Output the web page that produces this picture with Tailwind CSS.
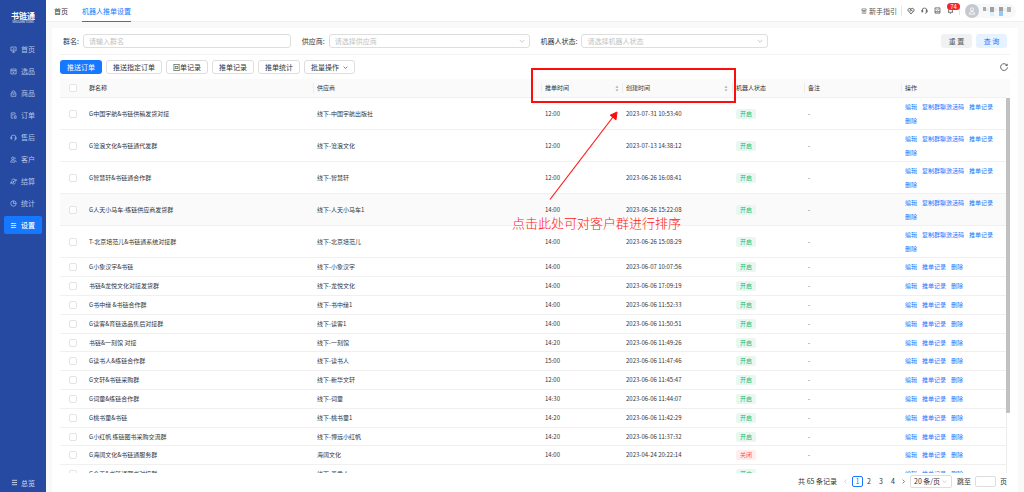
<!DOCTYPE html>
<html lang="zh-CN">
<head>
<meta charset="utf-8">
<meta name="viewport" content="width=device-width, initial-scale=1">
<title>机器人推单设置</title>
<script src="https://cdn.jsdelivr.net/npm/@tailwindcss/browser@4"></script>
</head>
<body class="h-screen overflow-hidden bg-[#f9f9f9] font-['Noto_Sans_CJK_SC',sans-serif] text-[7px] leading-[10px] text-[#333]">
<svg class="hidden">
  <defs>
    <symbol id="i-down" viewBox="0 0 8 8"><path d="M1 2.5l3 3.2 3-3.2" /></symbol>
    <symbol id="i-home" viewBox="0 0 8 8"><path d="M1 1.2h6v4.3H1zM2.5 7.2h3M4 5.5v1.7M2.6 4.2V3.4M4 4.2V2.6M5.4 4.2V3" /></symbol>
    <symbol id="i-pick" viewBox="0 0 8 8"><path d="M1 1.2h6v5.6H1zM1 3h6M3 4.2l2 1.6M5 4.2L3 5.8" /></symbol>
    <symbol id="i-goods" viewBox="0 0 8 8"><path d="M1.3 3.4h5.4v3.8H1.3zM2.3 3.4V2.6a1.7 1.7 0 0 1 3.4 0v.8M3 5.2h2" /></symbol>
    <symbol id="i-order" viewBox="0 0 8 8"><path d="M5.8 3V1H1.4v6h2.4M2.6 2.8h1.8M2.6 4.4h1M5 4.4h2v2.8H5z" /></symbol>
    <symbol id="i-head" viewBox="0 0 8 8"><path d="M1.2 4.6V4a2.8 2.8 0 0 1 5.6 0v.6M1 3.9h1v1.9H1zM6 3.9h1v1.9H6zM6.5 5.8c0 1-.8 1.4-2 1.4" /></symbol>
    <symbol id="i-user" viewBox="0 0 8 8"><path d="M3.2 4a1.4 1.4 0 1 0 0-2.8 1.4 1.4 0 0 0 0 2.8zM.8 7c0-1.6 1-2.4 2.4-2.4S5.6 5.4 5.6 7zM5.2 1.6a1.2 1.2 0 0 1 .3 2.2M6 4.8c.8.4 1.2 1.2 1.2 2.2" /></symbol>
    <symbol id="i-settle" viewBox="0 0 8 8"><path d="M6.8 3.4A2.9 2.9 0 0 0 1.5 2.6M1.2 4.6a2.9 2.9 0 0 0 5.3.8M7 1.2v2.2H5M1 6.8V4.6h2M3 3l1 1 1-1M4 4v1.5M3.1 4.3h1.8" /></symbol>
    <symbol id="i-stat" viewBox="0 0 8 8"><path d="M4 7.1a3.1 3.1 0 1 0 0-6.2 3.1 3.1 0 0 0 0 6.2zM4 1v3h3" /></symbol>
    <symbol id="i-set" viewBox="0 0 8 8"><path d="M1 1.7h6M1 4h6M1 6.3h6M2.8 1v1.4M5.2 3.3v1.4M2.8 5.6V7" /></symbol>
    <symbol id="i-menu" viewBox="0 0 8 8"><path d="M1 1.5h6M1 4h6M1 6.5h6" /></symbol>
    <symbol id="i-guide" viewBox="0 0 8 8"><path d="M1.2 1.2h5.6v2.2H1.2zM.8 5.2h6.4M1.2 7h5.6M4 3.4v1.8" /></symbol>
    <symbol id="i-shake" viewBox="0 0 8 8"><path d="M2.2 1.2L.6 3 4 7l3.4-4-1.6-1.8L4 2zM4 2L2.8 3.4l1 .7 1-.8 1.2 1.3" /></symbol>
    <symbol id="i-box" viewBox="0 0 8 8"><path d="M1.2 1h5.6v6H1.2zM1.2 5.4h5.6M2.8 2.6L4 3.7l1.2-1.1" /></symbol>
    <symbol id="i-bell" viewBox="0 0 8 8"><path d="M1 6h6M1.8 6V3.6a2.2 2.2 0 0 1 4.4 0V6M3.3 7.2h1.4M4 .8v.6" /></symbol>
    <symbol id="i-sort" viewBox="0 0 4 8"><path d="M2 .8L3.8 3H.2zM2 7.2L3.8 5H.2z" /></symbol>
  </defs>
</svg>

<div class="flex h-full">
  <aside class="flex w-[46px] shrink-0 flex-col bg-[#2649a1] text-[#b5c3e6]">
    <div class="flex flex-col items-center pt-[10px] text-white">
      <div class="text-[8px] leading-[11px] font-bold">书链通</div>
      <div class="text-[3px] leading-[3px]">SHULIAN TONG</div>
    </div>
    <nav id="menu" class="mt-[16px] flex flex-col gap-1 px-1"></nav>
    <a href="#" class="mt-auto flex h-[19px] items-center gap-[3px] pl-[11px] whitespace-nowrap text-[#d5def2]"><svg class="size-[7px] fill-none stroke-current" viewBox="0 0 8 8"><use href="#i-menu"/></svg>总览</a>
  </aside>

  <div class="flex min-w-0 flex-1 flex-col">
    <header class="flex h-[22px] shrink-0 items-stretch border-b border-[#f0f0f0] bg-white pr-2 pl-2">
      <nav class="flex gap-[14px]">
        <a href="#" class="flex items-center">首页</a>
        <a href="#" class="-mb-px flex items-center border-b border-[#1677ff] text-[#1677ff]">机器人推单设置</a>
      </nav>
      <div class="ml-auto flex items-center text-[#444]">
        <a href="#" class="flex items-center gap-[2px] border-r border-[#e5e5e5] pr-1 text-[#555]"><svg class="size-[6px] fill-none stroke-current stroke-[0.8]" viewBox="0 0 8 8"><use href="#i-guide"/></svg>新手指引</a>
        <div class="flex items-center gap-[6px] border-r border-[#e5e5e5] pr-[5px] pl-[5px]">
          <button aria-label="合作"><svg class="size-[8px] fill-none stroke-current stroke-[0.8]" viewBox="0 0 8 8"><use href="#i-shake"/></svg></button>
          <button aria-label="客服"><svg class="size-[7px] fill-none stroke-current stroke-[0.8]" viewBox="0 0 8 8"><use href="#i-head"/></svg></button>
          <button aria-label="消息"><svg class="size-[7px] fill-none stroke-current stroke-[0.8]" viewBox="0 0 8 8"><use href="#i-box"/></svg></button>
          <button aria-label="通知" class="relative"><svg class="size-[7px] fill-none stroke-current stroke-[0.8]" viewBox="0 0 8 8"><use href="#i-bell"/></svg><span class="absolute -top-1 left-0 h-[7px] w-[13px] rounded-full bg-[#f5222d] text-center text-[6px] leading-[7px] text-white">74</span></button>
        </div>
        <div class="ml-[5px] flex h-[14px] w-[51px] items-center gap-1 rounded-full bg-[#f7f8f9]">
          <svg class="size-[14px]" viewBox="0 0 14 14"><circle cx="7" cy="7" r="7" fill="#c5c9cf"/><path d="M7 7a1.6 1.6 0 1 0 0-3.2A1.6 1.6 0 0 0 7 7zM4.3 10.2c0-1.6 1-2.5 2.7-2.5s2.7.9 2.7 2.5z" fill="none" stroke="#fff" stroke-width=".8"/></svg>
          <svg class="h-[10px] w-[29px]" viewBox="0 0 29 10"><path fill="#a8a8a8" d="M0 1h3v4H0z"/><path fill="#9f9f9f" d="M7 1h4v5H7zM16 1h4v4h-4z"/><path fill="#b5aeb0" d="M24 1h4v5h-4z"/><path fill="#d9f1fb" d="M7 6h4v4H7z"/><path fill="#8ecbfa" d="M16 5h4v5h-4z"/><path fill="#efefef" d="M3 2h3v3H3zM11 2h3v3h-3zM20 2h4v3h-4z"/></svg>
        </div>
      </div>
    </header>

    <main class="mx-[6px] mt-[6px] flex min-h-0 flex-1 flex-col bg-white px-2">
      <form class="grid h-[27px] shrink-0 grid-cols-4 items-center gap-[11px] border-b border-[#f2f2f2] pr-[3px] pl-[3px]">
        <label class="flex items-center gap-1">群名:<input type="text" placeholder="请输入群名" class="h-[14px] min-w-0 flex-1 rounded-[3px] border border-[#dedede] px-[5px] outline-none placeholder:text-[#bfbfbf]"></label>
        <label class="flex items-center gap-1">供应商:<span class="relative flex flex-1"><select class="h-[14px] w-full appearance-none rounded-[3px] border border-[#dedede] px-[5px] text-[#bfbfbf]"><option>请选择供应商</option></select><svg class="pointer-events-none absolute top-1 right-[5px] size-[6px] fill-none stroke-[#bbb]" viewBox="0 0 8 8"><use href="#i-down"/></svg></span></label>
        <label class="flex items-center gap-1">机器人状态:<span class="relative flex flex-1"><select class="h-[14px] w-full appearance-none rounded-[3px] border border-[#dedede] px-[5px] text-[#bfbfbf]"><option>请选择机器人状态</option></select><svg class="pointer-events-none absolute top-1 right-[5px] size-[6px] fill-none stroke-[#bbb]" viewBox="0 0 8 8"><use href="#i-down"/></svg></span></label>
        <div class="flex justify-end gap-1">
          <button type="reset" class="h-[14px] w-[31px] rounded-[3px] bg-[#f0f1f3] text-[#555]">重 置</button>
          <button type="submit" class="h-[14px] w-[31px] rounded-[3px] bg-[#e6f2ff] text-[#1677ff]">查 询</button>
        </div>
      </form>

      <div class="flex h-6 shrink-0 items-center gap-1">
        <button class="h-[14px] rounded-[3px] bg-[#1677ff] px-[7px] text-white">推送订单</button>
        <button class="h-[14px] rounded-[3px] border border-[#dedede] px-[6px]">推送指定订单</button>
        <button class="h-[14px] rounded-[3px] border border-[#dedede] px-[6px]">回单记录</button>
        <button class="h-[14px] rounded-[3px] border border-[#dedede] px-[6px]">推单记录</button>
        <button class="h-[14px] rounded-[3px] border border-[#dedede] px-[6px]">推单统计</button>
        <button class="flex h-[14px] items-center gap-1 rounded-[3px] border border-[#dedede] px-[6px]">批量操作<svg class="size-[5px] fill-none stroke-[#444]" viewBox="0 0 8 8"><use href="#i-down"/></svg></button>
        <button aria-label="刷新" class="mr-[2px] ml-auto"><svg class="size-[8px] fill-none stroke-[#444] stroke-[0.8]" viewBox="0 0 8 8"><path d="M6.9 2.3A3.4 3.4 0 1 0 7.4 4.3M7.2.8v1.7H5.5"/></svg></button>
      </div>

      <div class="flex min-h-0 flex-1 items-stretch overflow-hidden text-[6px] leading-[10px]">
        <div class="min-w-0 flex-1 overflow-hidden">
          <table class="w-full table-fixed border-separate border-spacing-0 text-left">
            <colgroup><col class="w-[25px]"><col><col><col class="w-[81px]"><col class="w-[110px]"><col class="w-[72px]"><col class="w-[97px]"><col class="w-[105px]"></colgroup>
            <thead>
              <tr class="h-[19px] bg-[#fafafa] *:border-b *:border-[#f0f0f0] *:p-0 *:font-normal">
                <th><input type="checkbox" aria-label="全选" class="mx-auto block size-[8px] appearance-none rounded-[2px] border border-[#e4e4e4] bg-white"></th>
                <th><div class="px-1">群名称</div></th>
                <th><div class="border-l border-[#ececec] px-[3px]">供应商</div></th>
                <th><div class="flex items-center justify-between border-l border-[#ececec] px-[3px]">推单时间<svg class="h-[7px] w-[4px] fill-[#aaa]"><use href="#i-sort"/></svg></div></th>
                <th><div class="flex items-center justify-between border-l border-[#ececec] pr-1 pl-[3px]">创建时间<svg class="h-[7px] w-[4px] fill-[#aaa]"><use href="#i-sort"/></svg></div></th>
                <th><div class="border-l border-[#ececec] px-[3px]">机器人状态</div></th>
                <th><div class="border-l border-[#ececec] px-[3px]">备注</div></th>
                <th><div class="border-l border-[#ececec] px-[3px]">操作</div></th>
              </tr>
            </thead>
            <tbody id="rows"></tbody>
          </table>
        </div>
        <div class="flex w-1 flex-col">
          <div class="h-[19px] shrink-0 bg-[#fafafa]"></div>
          <div class="flex-1 border-l border-[#ececec]"><div class="-ml-px h-[84%] w-1 rounded-b-[1px] bg-[#c1c1c1]"></div></div>
        </div>
      </div>

      <div class="flex h-[19px] shrink-0 items-center justify-end pr-[3px] pb-[3px]">
        <span class="mr-[6px]">共 65 条记录</span>
        <button aria-label="上一页" class="mr-1"><svg class="size-[5px] rotate-90 fill-none stroke-[#bbb]" viewBox="0 0 8 8"><use href="#i-down"/></svg></button>
        <button class="size-[11px] rounded-[2px] border border-[#1677ff] leading-[9px] text-[#1677ff]">1</button>
        <button class="w-[12px]">2</button>
        <button class="w-[12px]">3</button>
        <button class="w-[12px]">4</button>
        <button aria-label="下一页" class="mr-1 ml-[2px]"><svg class="size-[5px] -rotate-90 fill-none stroke-[#444]" viewBox="0 0 8 8"><use href="#i-down"/></svg></button>
        <span class="relative flex"><select aria-label="每页条数" class="h-[13px] w-[42px] appearance-none rounded-[2px] border border-[#dedede] pl-[3px]"><option>20 条/页</option></select><svg class="pointer-events-none absolute top-1 right-[5px] size-[5px] fill-none stroke-[#bbb]" viewBox="0 0 8 8"><use href="#i-down"/></svg></span>
        <label class="ml-[5px] flex items-center gap-1">跳至<input type="text" class="h-[11px] w-[21px] rounded-[2px] border border-[#dedede]"></label>
        <span class="ml-1">页</span>
      </div>
    </main>
  </div>
</div>

<!-- Annotation drawn over the table -->
<div class="pointer-events-none absolute top-[68px] left-[531px] h-[35px] w-[205px] border-2 border-[#ff0d0d]"></div>
<svg class="pointer-events-none absolute top-[108px] left-[545px] h-[95px] w-[80px]" viewBox="0 0 80 95"><path d="M5 91.5L68 9" stroke="#ff1a1a" stroke-width="1.2" fill="none"/><path d="M72 4L65.2 7.2 71 11.8z" fill="#ff0d0d" stroke="#ff0d0d"/></svg>
<p class="pointer-events-none absolute top-[215px] left-[512px] font-['Liberation_Serif','Noto_Sans_CJK_SC',serif] text-[13px] leading-[18px] font-light whitespace-nowrap text-[#ff2020]">点击此处可对客户群进行排序</p>

<script>
const menu = [['i-home','首页'],['i-pick','选品'],['i-goods','商品'],['i-order','订单'],['i-head','售后'],['i-user','客户'],['i-settle','结算'],['i-stat','统计'],['i-set','设置']];
document.getElementById('menu').innerHTML = menu.map(([icon, name]) => `
  <a href="#" class="${name === '设置' ? 'flex h-[18px] items-center gap-1 rounded-[2px] bg-[#1677ff] px-[6px] font-medium text-white' : 'flex h-[18px] items-center gap-1 px-[6px]'}">
    <svg class="size-[7px] fill-none stroke-current stroke-[0.8]" viewBox="0 0 8 8"><use href="#${icon}"/></svg>${name}</a>`).join('');

const rows = [
  ['G中国宇航&书链供稿发货对接','线下-中国宇航出版社','12:00','2023-07-31 10:53:40',1],
  ['G沧浪文化&书链通代发群','线下-沧浪文化','12:00','2023-07-13 14:38:12',1],
  ['G智慧轩&书链通合作群','线下-智慧轩','12:00','2023-06-26 16:08:41',1],
  ['G人天小马车-练链供应商发货群','线下-人天小马车1','14:00','2023-06-26 15:22:08',1],
  ['T-北京培范儿&书链通系统对接群','线下-北京培范儿','14:00','2023-06-26 15:08:29',1],
  ['G小象汉字&书链','线下-小象汉字','14:00','2023-06-07 10:07:56'],
  ['书链&龙悦文化对接发货群','线下-龙悦文化','14:00','2023-06-06 17:09:19'],
  ['G书中缘 &书链合作群','线下-书中缘1','14:00','2023-06-06 11:52:33'],
  ['G读客&育链选品售后对接群','线下-读客1','14:00','2023-06-06 11:50:51'],
  ['书链&一刻馆 对接','线下-一刻馆','14:20','2023-06-06 11:49:26'],
  ['G读书人&练链合作群','线下-读书人','15:00','2023-06-06 11:47:46'],
  ['G文轩&书链采购群','线下-新华文轩','12:00','2023-06-06 11:45:47'],
  ['G词童&练链合作群','线下-词童','14:30','2023-06-06 11:44:07'],
  ['G桃书童&书链','线下-桃书童1','14:20','2023-06-06 11:42:29'],
  ['G小红帆 练链图书采购交流群','线下-博远小红帆','14:20','2023-06-06 11:37:32'],
  ['G海阔文化&书链通服务群','海阔文化','14:00','2023-04-24 20:22:14'],
  ['G今天&书链通图书对接群','线下-墨香人','',''],
];
document.getElementById('rows').innerHTML = rows.map(([name, supplier, time, created, tall], i) => `
  <tr class="${tall ? (i === 3 ? 'h-8 bg-[#fafafa] *:border-b *:border-[#f0f0f0] *:p-0' : 'h-8 *:border-b *:border-[#f0f0f0] *:p-0') : 'h-[19px] *:border-b *:border-[#f0f0f0] *:p-0 nth-[5n]:h-[18px]'}">
    <td><input type="checkbox" aria-label="选择" class="mx-auto block size-[8px] appearance-none rounded-[2px] border border-[#e4e4e4] bg-white"></td>
    <td><div class="px-1">${name.replace('&', '&amp;')}</div></td>
    <td><div class="px-1">${supplier}</div></td>
    <td><div class="px-1">${time}</div></td>
    <td><div class="px-1">${created}</div></td>
    <td><div class="flex px-1"><span class="${supplier === '海阔文化' ? 'rounded-[2px] bg-[#ffecec] px-1 text-[#ff4d4f]' : 'rounded-[2px] bg-[#e8f8f0] px-1 text-[#27b56c]'}">${supplier === '海阔文化' ? '关闭' : '开启'}</span></div></td>
    <td><div class="px-1">${time && '-'}</div></td>
    <td><div class="${tall ? 'flex flex-wrap gap-x-[5px] gap-y-1 px-1 text-[#1677ff]' : 'flex gap-x-[5px] px-1 text-[#1677ff]'}"><a href="#">编辑</a>${tall ? '<a href="#">复制群聊激活码</a>' : ''}<a href="#">推单记录</a><a href="#">删除</a></div></td>
  </tr>`).join('');
</script>
</body>
</html>
